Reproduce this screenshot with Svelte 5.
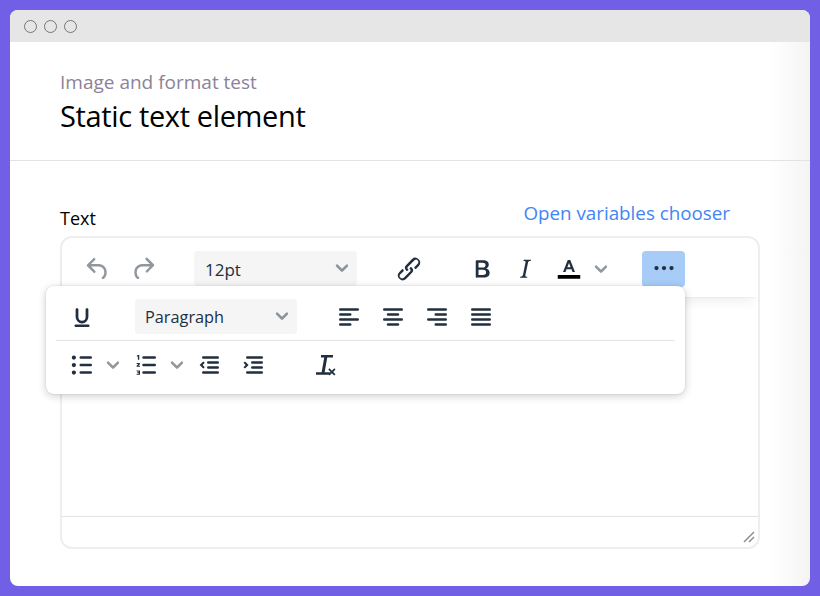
<script>
  const underline = "M16 5c.7 0 1.100.4 1.100 1v6a5.100 5.100 0 0 1-10.200 0V6c0-.6.4-1 1.100-1s1.100.4 1.100 1v6a2.900 2.900 0 0 0 5.800 0V6c0-.6.4-1 1.100-1ZM7 17.900h10a1 1 0 1 1 0 2.100H7a1 1 0 1 1 0-2.100Z";
</script>

{#snippet chev(cls)}
  <svg class={"chev " + cls} viewBox="0 0 24 24"><path d="M7.300 9.300a1 1 0 0 1 1.400 0L12 12.600l3.300-3.300a1 1 0 0 1 1.400 1.400l-4 4a1 1 0 0 1-1.400 0l-4-4a1 1 0 0 1 0-1.400Z"/></svg>
{/snippet}

{#snippet ico(d, cls = "")}
  <span class={"btn " + cls}><svg viewBox="0 0 24 24"><path d={d}/></svg></span>
{/snippet}

<div class="window">
  <div class="titlebar">
    <i class="dot"></i><i class="dot"></i><i class="dot"></i>
  </div>
  <div class="main">
    <header class="head">
      <div class="sub">Image and format test</div>
      <h1>Static text element</h1>
    </header>
    <section class="body">
      <div class="labelrow">
        <span class="label">Text</span>
        <span class="chooser">Open variables chooser</span>
      </div>
      <div class="editor">
        <div class="toolbar">
          <div class="undo">
            {@render ico("M6.400 8H12c3.700 0 6.200 2 6.800 5.100.6 2.700-.4 5.600-2.300 6.800a1 1 0 0 1-1-1.800c1.100-.6 1.800-2.700 1.400-4.600-.5-2.100-2.100-3.500-4.900-3.500H6.400l3.300 3.300a1 1 0 1 1-1.400 1.400l-5-5a1 1 0 0 1 0-1.400l5-5a1 1 0 0 1 1.400 1.400L6.400 8Z", "off")}
            {@render ico("M17.600 10H12c-2.800 0-4.400 1.400-4.900 3.500-.4 2 .3 4 1.400 4.600a1 1 0 1 1-1 1.800c-2-1.200-2.900-4.100-2.300-6.800.6-3 3-5.100 6.800-5.100h5.600l-3.300-3.300a1 1 0 1 1 1.400-1.400l5 5a1 1 0 0 1 0 1.400l-5 5a1 1 0 0 1-1.400-1.400l3.300-3.300Z", "off redo")}
          </div>
          <div class="select size"><span>12pt</span>{@render chev("")}</div>
          {@render ico("M6.200 12.300a1 1 0 0 1 1.400 1.400l-2 2a2 2 0 1 0 2.600 2.800l4.800-4.800a1 1 0 0 0 0-1.400 1 1 0 1 1 1.400-1.300 2.900 2.900 0 0 1 0 4L9.600 20a3.900 3.900 0 0 1-5.500-5.500l2-2Zm11.600-.6a1 1 0 0 1-1.400-1.400l2-2a2 2 0 1 0-2.600-2.800L11 10.300a1 1 0 0 0 0 1.400A1 1 0 1 1 9.600 13a2.900 2.900 0 0 1 0-4L14.400 4a3.900 3.900 0 0 1 5.500 5.500l-2 2Z", "link")}
          <div class="fmt">
            {@render ico("M7.800 19c-.3 0-.5 0-.6-.2l-.2-.5V5.700c0-.2 0-.4.2-.5l.6-.2h5c1.500 0 2.700.3 3.500 1 .7.6 1.100 1.400 1.100 2.500a3 3 0 0 1-.6 1.900c-.4.6-1 1-1.600 1.200.9.1 1.600.5 2.100 1.100.5.6.8 1.300.8 2.200 0 1.200-.4 2.200-1.200 2.900-.8.7-2 1-3.500 1H7.800Zm4.600-8.200c1.600 0 2.400-.6 2.400-1.900 0-1.200-.8-1.800-2.400-1.800H9.200v3.700h3.200Zm.4 5.900c.8 0 1.500-.2 1.900-.5.4-.4.6-.9.6-1.600 0-.7-.2-1.200-.6-1.500-.4-.4-1-.5-1.900-.5H9.200v4.100h3.600Z")}
            {@render ico("M16.700 4.700l-.1.9h-.3c-.6 0-1 0-1.400.3-.3.3-.4.6-.5 1.100l-2.100 9.800v.6c0 .5.4.8 1.400.8h.2l-.2.8H8l.2-.8h.2c1.100 0 1.800-.5 2-1.500l2-9.800.1-.5c0-.6-.4-.8-1.400-.8h-.3l.2-.9h5.800Z")}
            <span class="btn color">
              <svg viewBox="0 0 24 24">
                <path fill-rule="evenodd" d="M7.200 14.400 11 4.800h2l3.800 9.600h-2l-.8-2.200h-4l-.8 2.200h-2Zm3.500-3.800h2.600L12 7.200l-1.300 3.400Z"/>
                <rect class="black" x="3" y="16.800" width="18" height="3"/>
              </svg>
            </span>
            {@render chev("colorchev")}
          </div>
          <span class="more"><svg viewBox="0 0 24 24"><path d="M6 10.300a1.700 1.700 0 1 1 0 3.400 1.700 1.700 0 0 1 0-3.400Zm6 0a1.700 1.700 0 1 1 0 3.400 1.700 1.700 0 0 1 0-3.400Zm6 0a1.700 1.700 0 1 1 0 3.400 1.700 1.700 0 0 1 0-3.400Z"/></svg></span>
        </div>
        <div class="content"></div>
        <div class="status">
          <svg class="grip" viewBox="0 0 12 12"><path d="M1 11 11 1M6 11l5-5"/></svg>
        </div>
      </div>
      <div class="popup">
        <div class="row r1">
          {@render ico(underline, "under")}
          <div class="select para"><span>Paragraph</span>{@render chev("")}</div>
          <div class="aligns">
            {@render ico("M5 5h14a1 1 0 1 1 0 2H5a1 1 0 1 1 0-2Zm0 4h8a1 1 0 1 1 0 2H5a1 1 0 1 1 0-2Zm0 8h8a1 1 0 1 1 0 2H5a1 1 0 1 1 0-2Zm0-4h14a1 1 0 1 1 0 2H5a1 1 0 1 1 0-2Z")}
            {@render ico("M5 5h14a1 1 0 1 1 0 2H5a1 1 0 1 1 0-2Zm3 4h8a1 1 0 1 1 0 2H8a1 1 0 1 1 0-2Zm0 8h8a1 1 0 1 1 0 2H8a1 1 0 1 1 0-2Zm-3-4h14a1 1 0 1 1 0 2H5a1 1 0 1 1 0-2Z")}
            {@render ico("M5 5h14a1 1 0 1 1 0 2H5a1 1 0 1 1 0-2Zm6 4h8a1 1 0 1 1 0 2h-8a1 1 0 1 1 0-2Zm0 8h8a1 1 0 1 1 0 2h-8a1 1 0 1 1 0-2Zm-6-4h14a1 1 0 1 1 0 2H5a1 1 0 1 1 0-2Z")}
            {@render ico("M5 5h14a1 1 0 1 1 0 2H5a1 1 0 1 1 0-2Zm0 4h14a1 1 0 1 1 0 2H5a1 1 0 1 1 0-2Zm0 4h14a1 1 0 1 1 0 2H5a1 1 0 1 1 0-2Zm0 4h14a1 1 0 1 1 0 2H5a1 1 0 1 1 0-2Z")}
          </div>
        </div>
        <div class="divider"></div>
        <div class="row r2">
          {@render ico("M11 5h8a1 1 0 1 1 0 2h-8a1 1 0 1 1 0-2Zm0 6h8a1 1 0 1 1 0 2h-8a1 1 0 1 1 0-2Zm0 6h8a1 1 0 1 1 0 2h-8a1 1 0 1 1 0-2ZM5.500 4.300a1.700 1.700 0 1 1 0 3.400 1.700 1.700 0 0 1 0-3.400Zm0 6a1.700 1.700 0 1 1 0 3.400 1.700 1.700 0 0 1 0-3.400Zm0 6a1.700 1.700 0 1 1 0 3.400 1.700 1.700 0 0 1 0-3.400Z", "list")}
          {@render chev("c1")}
          {@render ico("M10 17h9a1 1 0 1 1 0 2h-9a1 1 0 1 1 0-2Zm0-6h9a1 1 0 1 1 0 2h-9a1 1 0 1 1 0-2Zm0-6h9a1 1 0 1 1 0 2h-9a1 1 0 1 1 0-2ZM5.500 4h1.100v3.800H5.500V5.100h-.8V4.500ZM4.500 10.300h2.600v1l-1.200 1.300h1.300v.8H4.500v-.9l1.300-1.400H4.500ZM4.500 16.400h2.700v3.400H4.500v-.8h1.600v-.6H5v-.6h1.100v-.6H4.500Z", "list")}
          {@render chev("c2")}
          {@render ico("M7.400 5H19a1 1 0 1 1 0 2H7.400a1 1 0 1 1 0-2Zm4 4H19a1 1 0 1 1 0 2h-7.600a1 1 0 1 1 0-2Zm0 4H19a1 1 0 1 1 0 2h-7.600a1 1 0 1 1 0-2Zm-4 4H19a1 1 0 1 1 0 2H7.400a1 1 0 1 1 0-2ZM7.400 9.200l1.200 1-1.700 1.800 1.700 1.800-1.200 1L4.500 12Z", "outd")}
          {@render ico("M7.400 5H19a1 1 0 1 1 0 2H7.400a1 1 0 1 1 0-2Zm4 4H19a1 1 0 1 1 0 2h-7.600a1 1 0 1 1 0-2Zm0 4H19a1 1 0 1 1 0 2h-7.600a1 1 0 1 1 0-2Zm-4 4H19a1 1 0 1 1 0 2H7.400a1 1 0 1 1 0-2ZM5.600 9.200l-1.200 1 1.700 1.800-1.700 1.800 1.200 1L8.500 12Z", "ind")}
          {@render ico("M13.800 6 11.700 17.800H9.300L11.400 6H8.800V4h9.600v2ZM4.800 17.800h11v2h-11ZM15.600 14.600l1.900 1.900 1.900-1.900 1 1-1.900 1.900 1.900 1.900-1 1-1.900-1.900-1.900 1.900-1-1 1.900-1.900-1.900-1.900Z", "clear")}
        </div>
      </div>
    </section>
  </div>
</div>

<style>
  :global(body) { margin: 0; background: #7160e6; }
  .window {
    box-sizing: border-box; width: 800px; height: 576px; margin: 10px 0 0 10px;
    border-radius: 8px; overflow: hidden; display: flex; flex-direction: column;
    background: linear-gradient(to right, #fff 95%, #f4f4f4 100%);
    font-family: "Open Sans", "Noto Sans", sans-serif;
  }
  .titlebar { height: 32px; background: #e6e6e6; display: flex; align-items: center; gap: 7px; padding-left: 14px; flex: none; }
  .dot { width: 11px; height: 11px; border: 1px solid #757575; border-radius: 50%; }
  .main { flex: 1; position: relative; }
  .head { height: 119px; box-sizing: border-box; padding: 28px 50px 0; border-bottom: 1px solid #e3e3e6; }
  .sub { font-size: 19px; line-height: 24px; color: #8c8299; }
  h1 { margin: 2px 0 0; font-size: 29px; line-height: 40px; font-weight: 400; color: #000; letter-spacing: -0.36px; }
  .body { padding: 43px 50px 0; }
  .labelrow { display: flex; justify-content: space-between; height: 32px; padding-right: 30px; }
  .label { font-size: 18px; line-height: 26px; color: #000; margin-top: 1px; }
  .chooser { font-size: 18.800px; line-height: 26px; color: #4285f4; margin-top: -4px; }
  .editor { box-sizing: border-box; height: 313px; border: 2px solid #eeeeee; border-radius: 12px; display: flex; flex-direction: column; background: #fff; }
  .toolbar { height: 59px; flex: none; display: flex; align-items: flex-start; padding-top: 13px; box-sizing: border-box; box-shadow: 0 2px 2px -2px rgba(34,47,62,.1), 0 10px 10px -5px rgba(34,47,62,.07); position: relative; }
  .btn { width: 44px; height: 36px; display: flex; align-items: center; justify-content: center; flex: none; }
  .btn svg { width: 30px; height: 30px; fill: #222f3e; display: block; }
  .btn.off svg { fill: rgba(34,47,62,.5); }
  .undo { display: flex; gap: 2px; margin-left: 14px; }
  .redo { margin-left: -1px; }
  .select { background: #f5f5f5; border-radius: 4px; display: flex; align-items: center; justify-content: space-between; box-sizing: border-box; font-size: 17px; color: #222f3e; }
  .select span { margin-top: 2px; }
  .select.size { width: 163px; height: 35px; margin-left: 29px; padding: 0 0 0 11px; }
  .select.para { width: 162px; height: 35px; margin-left: 31px; padding: 0 0 0 10px; font-size: 16.300px; }
  .select.para span { margin-top: 1px; }
  .chev { width: 30px; height: 30px; fill: rgba(34,47,62,.5); flex: none; }
  .select .chev { margin-top: -2px; }
  .btn.link { margin-left: 30px; }
  .fmt { display: flex; margin-left: 29px; }
  .fmt .btn { width: 43px; }
  .fmt .color { margin-left: 1px; }
  .color svg .black { fill: #000; }
  .colorchev { margin-left: -4px; margin-top: 3px; }
  .more { margin-left: 26px; width: 43px; height: 36px; background: #a6ccf7; border-radius: 4px; display: flex; align-items: center; justify-content: center; }
  .more svg { width: 30px; height: 30px; fill: #222f3e; margin-top: -2px; }
  .content { flex: 1; }
  .status { height: 31px; flex: none; box-sizing: border-box; border-top: 1px solid #e3e3e6; display: flex; justify-content: flex-end; align-items: flex-end; padding: 0 3px 4px 0; }
  .grip { width: 12px; height: 12px; fill: none; stroke: #8a8f98; stroke-width: 1.500; }
  .popup { position: absolute; left: 36px; top: 244px; width: 639px; height: 108px; background: #fff; border-radius: 8px; box-shadow: 0 2px 8px rgba(0,0,0,.2), 0 0 2px rgba(0,0,0,.12); }
  .row { display: flex; align-items: center; }
  .r1 { height: 54px; padding: 7px 0 0 14px; box-sizing: border-box; }
  .divider { height: 1px; margin: 0 10px; background: #e3e3e6; }
  .r2 { height: 48px; padding-left: 14px; }
  .aligns { display: flex; margin-left: 30px; }
  .r2 .c1 { margin-left: -6px; }
  .r2 .c1 + .btn { margin-left: -4px; }
  .r2 .c2 { margin-left: -6px; }
  .r2 .c2 + .btn { margin-left: -5px; }
  .r2 .clear { margin-left: 28px; }
</style>
